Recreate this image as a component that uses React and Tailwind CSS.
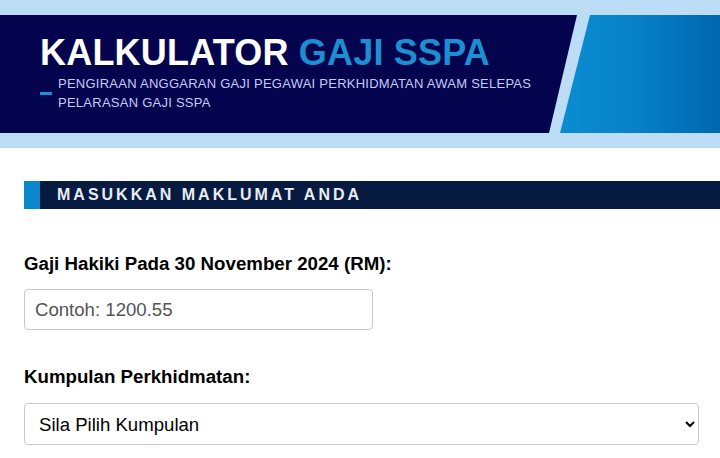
import React from 'react'

export default function App() {
  return (
    <div className="min-h-[458px] bg-white font-['Liberation_Sans',Arial,sans-serif] text-black">
      {/* banner */}
      <div className="bg-[#bddcf6] py-[15px]">
        <div className="flex h-[118px]">
          <div className="w-[577px] shrink-0 bg-[#03034e] pl-[40px] pt-[18px] [clip-path:polygon(0_0,100%_0,calc(100%-28px)_100%,0_100%)]">
            <h1 className="text-[36px] font-bold leading-[40px] tracking-[0.2px] text-white">
              KALKULATOR <span className="text-[#1b8fd2]">GAJI SSPA</span>
            </h1>
            <div className="mt-[1px] flex items-center">
              <span className="mr-[6px] h-[3px] w-[12px] bg-[#1b8fd2]"></span>
              <p className="text-[13px] leading-[19px] tracking-[0.25px] text-[#c6cbf8]">
                PENGIRAAN ANGGARAN GAJI PEGAWAI PERKHIDMATAN AWAM SELEPAS
                <br />
                PELARASAN GAJI SSPA
              </p>
            </div>
          </div>
          <div className="-ml-[17px] flex-1 bg-gradient-to-r from-[#0b8dd1] via-[#0780c6] to-[#0067b0] [clip-path:polygon(30px_0,100%_0,100%_100%,0_100%)]"></div>
        </div>
      </div>

      <div className="pl-[24px]">
        {/* section title */}
        <div className="mt-[33px] flex h-[28px] items-center bg-[#061b3f]">
          <div className="h-full w-[16px] bg-[#0a88cb]"></div>
          <h2 className="ml-[17px] text-[16px] font-bold tracking-[3px] text-[#e8ecf3]">
            MASUKKAN MAKLUMAT ANDA
          </h2>
        </div>

        <form className="pr-[21px]">
          <label className="mt-[44px] block text-[18.7px] font-bold leading-[22px]">
            Gaji Hakiki Pada 30 November 2024 (RM):
          </label>
          <input
            type="text"
            placeholder="Contoh: 1200.55"
            className="mt-[14px] block h-[41px] w-[349px] rounded-[4px] border border-[#c8c8c8] px-[10px] text-[18.6px] placeholder:text-[#555555]"
          />

          <label className="mt-[36px] block text-[18.7px] font-bold leading-[22px]">
            Kumpulan Perkhidmatan:
          </label>
          <select className="mt-[15px] block h-[42px] w-full rounded-[4px] border border-[#c8c8c8] bg-white px-[10px] text-[18.6px] text-black">
            <option>Sila Pilih Kumpulan</option>
          </select>
        </form>
      </div>
    </div>
  )
}
